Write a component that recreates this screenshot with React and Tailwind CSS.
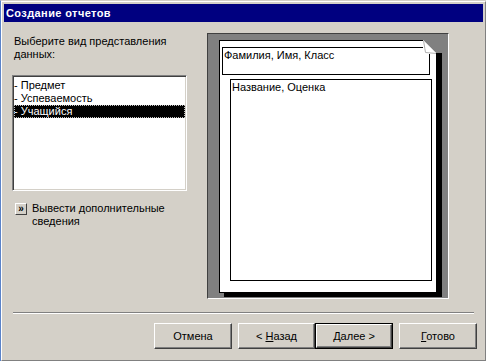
import React from 'react';

const font = "font-['Liberation_Sans',Arial,sans-serif]";

function Button({ children, isDefault, className = '' }) {
  const bevel = (
    <div className="flex h-full w-full items-center justify-center border border-t-white border-l-white border-r-[#404040] border-b-[#404040] shadow-[inset_-1px_-1px_0_#808080] text-[11px] leading-[13px] text-black">
      <span>{children}</span>
    </div>
  );
  if (isDefault) {
    return <div className={`h-[26px] border border-black ${className}`}>{bevel}</div>;
  }
  return <div className={`h-[26px] ${className}`}>{bevel}</div>;
}

export default function App() {
  const items = ['- Предмет', '- Успеваемость', '- Учащийся'];

  return (
    <div className={`w-[486px] h-[361px] overflow-hidden bg-[#d4d0c8] border-l border-l-[#5b83c9] border-t border-t-[#d4d0c8] ${font} text-black`}>
      <div className="flex h-full flex-col border-t border-l border-white border-r border-r-[#808080] border-b border-b-[#808080] p-[2px]">
        {/* Title bar */}
        <div className="h-[18px] shrink-0 bg-[#000080] pl-[2px] text-[11px] font-bold leading-[18px] tracking-[0.4px] text-white">
          Создание отчетов
        </div>

        {/* Body */}
        <div className="flex flex-1 flex-col">
          <div className="flex pl-[8px]">
            {/* Left column */}
            <div className="w-[175px] shrink-0">
              <div className="mt-[13px] pl-[2px] text-[11px] leading-[13px]">
                Выберите вид представления
                <br />
                данных:
              </div>
              <div className="mt-[14px] h-[116px] w-[175px] border border-t-[#808080] border-l-[#808080] border-r-white border-b-white bg-white px-[1px] pt-[3px] shadow-[inset_1px_1px_0_#404040,inset_-1px_-1px_0_#d4d0c8]">
                {items.map((it, i) => (
                  <div
                    key={it}
                    className={
                      i === 2
                        ? 'h-[13px] bg-black text-[11px] leading-[13px] text-white outline-1 outline-dotted outline-[#c0c0c0] -outline-offset-1'
                        : 'h-[13px] text-[11px] leading-[13px]'
                    }
                  >
                    {it}
                  </div>
                ))}
              </div>
              <div className="mt-[11px] flex items-start">
                <div className="ml-[3px] mt-[1px] flex h-[12px] w-[12px] shrink-0 items-center justify-center border border-t-white border-l-white border-r-[#404040] border-b-[#404040] text-[10px] font-bold leading-none">
                  »
                </div>
                <div className="ml-[5px] text-[11px] leading-[13px]">
                  Вывести дополнительные
                  <br />
                  сведения
                </div>
              </div>
            </div>

            {/* Preview panel */}
            <div className="ml-[20px] mt-[11px] h-[266px] w-[242px] shrink-0 border border-t-[#404040] border-l-[#404040] border-r-white border-b-white bg-[#808080] pl-[11px] pt-[6px]">
              <div className="relative h-[253px] w-[218px] border border-black bg-white shadow-[5px_4px_0_#000]">
                <svg
                  className="absolute top-[-1px] right-[-6px]"
                  width="19"
                  height="14"
                  viewBox="0 0 19 14"
                >
                  <rect x="0" y="0" width="19" height="14" fill="#808080" />
                  <polygon points="0,0 13,13 13,14 0,14" fill="#fff" />
                  <polygon points="0.5,0.5 2.5,12.5 13.5,13.5" fill="#fff" stroke="#b0b0b0" strokeWidth="1" />
                  <line x1="0.5" y1="0.5" x2="13.5" y2="13.5" stroke="#d8d8d8" strokeWidth="1" />
                  <rect x="13" y="13" width="1" height="1" fill="#000" />
                  <rect x="14" y="13" width="5" height="1" fill="#000" />
                </svg>
                <div className="ml-[2px] mt-[6px] h-[28px] w-[208px] border border-black pl-[1px] pt-[1px] text-[11px] leading-[13px]">
                  Фамилия, Имя, Класс
                </div>
                <div className="ml-[10px] mt-[4px] h-[202px] w-[202px] border border-black pl-[1px] pt-[1px] text-[11px] leading-[13px]">
                  Название, Оценка
                </div>
              </div>
            </div>
          </div>

          {/* Separator */}
          <div className="ml-[9px] mt-[13px] h-[2px] w-[461px] border-t border-t-[#808080] border-b border-b-white" />

          {/* Buttons */}
          <div className="mt-[9px] flex pl-[150px]">
            <Button className="w-[78px]">Отмена</Button>
            <Button className="ml-[6px] w-[77px]">
              &lt;&nbsp;<u>Н</u>азад
            </Button>
            <Button isDefault className="w-[78px]">
              <u>Д</u>алее&nbsp;&gt;
            </Button>
            <Button className="ml-[6px] w-[78px]">
              <u>Г</u>отово
            </Button>
          </div>
        </div>
      </div>
    </div>
  );
}
